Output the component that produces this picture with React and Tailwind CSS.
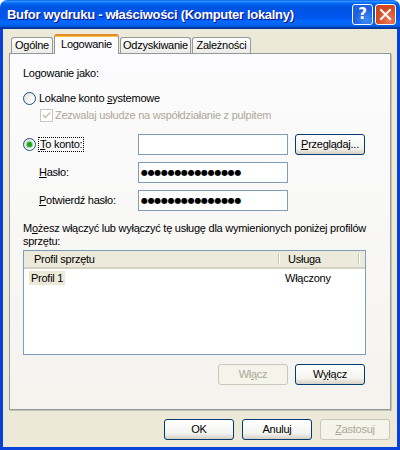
import React from "react";

function Radio({ checked }) {
  return (
    <span className="w-[13px] h-[13px] shrink-0 rounded-full border border-[#1c5180] bg-[linear-gradient(135deg,#dcdbd5,#ffffff_70%)] flex items-center justify-center">
      {checked && <span className="w-[5px] h-[5px] rounded-full bg-[#21a121] shadow-[0_0_1px_1px_#7fd87f]" />}
    </span>
  );
}

function DisabledCheck() {
  return (
    <span className="w-[13px] h-[13px] shrink-0 border border-[#cac8bb] bg-white flex items-center justify-center">
      <svg width="9" height="9" viewBox="0 0 9 9">
        <path d="M1 4 L3.5 6.5 L8 1.5" fill="none" stroke="#cac8bb" strokeWidth="1.8" />
      </svg>
    </span>
  );
}

function XpButton({ children, disabled }) {
  return (
    <div
      className={`h-[21px] w-[70px] rounded-[3px] border flex items-center justify-center ${
        disabled
          ? "border-[#c9c7ba] bg-[#f5f4ea] text-[#aca899]"
          : "border-[#003c74] bg-[linear-gradient(to_bottom,#ffffff,#f3f3ef_70%,#d6d0c5)] text-black"
      }`}
    >
      {children}
    </div>
  );
}

function Input({ password }) {
  return (
    <div className="h-[21px] w-[150px] border border-[#7f9db9] bg-white flex items-center pl-[2px]">
      {password && (
        <span className="font-['DejaVu_Sans',sans-serif] text-[8px] leading-none tracking-[-0.3px]">
          {"●".repeat(15)}
        </span>
      )}
    </div>
  );
}

function Tab({ label, active, w }) {
  if (active) {
    return (
      <div
        className={`${w} h-[20px] -mb-px relative z-10 rounded-t-[3px] border-x border-t-2 border-x-[#919b9c] border-t-[#e68b2c] shadow-[inset_0_1px_0_#ffc73c] bg-[#fcfcfe] flex items-center justify-center pb-[2px]`}
      >
        {label}
      </div>
    );
  }
  return (
    <div
      className={`${w} h-[16px] rounded-t-[3px] border-x border-t border-[#919b9c] bg-[linear-gradient(to_bottom,#ffffff,#ecebe6)] flex items-center justify-center`}
    >
      {label}
    </div>
  );
}

export default function App() {
  return (
    <div className="w-[400px] h-[450px] flex flex-col text-[11px] leading-[13px] tracking-[-0.25px] text-black font-['Liberation_Sans',Arial,sans-serif]">
      {/* title bar */}
      <div className="h-[29px] shrink-0 rounded-t-[7px] flex items-center pl-[7px] pr-[4px] bg-[linear-gradient(to_bottom,#0058ee_0%,#3593ff_4%,#288eff_6%,#127dff_8%,#036ffc_10%,#0262ee_14%,#0057e5_20%,#0054e3_24%,#0055eb_56%,#005bf5_66%,#026afe_76%,#0062ef_86%,#0052d6_92%,#0040ab_94%,#003092_100%)]">
        <div className="flex-1 text-white font-bold text-[13px] tracking-[-0.3px] [text-shadow:1px_1px_#0f1089] whitespace-nowrap">
          Bufor wydruku - właściwości (Komputer lokalny)
        </div>
        <div className="flex gap-[2px]">
          <div className="w-[21px] h-[21px] rounded-[3px] border border-white bg-[radial-gradient(circle_at_70%_80%,#3c8cf8,#1e5ede_60%,#2663e0)] flex items-center justify-center text-white font-bold text-[15px] font-['DejaVu_Sans',sans-serif]">
            ?
          </div>
          <div className="w-[21px] h-[21px] rounded-[3px] border border-white bg-[radial-gradient(circle_at_70%_80%,#e97a59,#d6491f_60%,#cc4520)] flex items-center justify-center">
            <svg width="13" height="13" viewBox="0 0 13 13">
              <path d="M2 2 L11 11 M11 2 L2 11" stroke="#ffffff" strokeWidth="2" strokeLinecap="square" />
            </svg>
          </div>
        </div>
      </div>

      {/* body */}
      <div className="flex-1 bg-[#ece9d8] border-x-[3px] border-b-[3px] border-[#0842d8] flex flex-col pl-[6px]">
        <div className="w-[383px] flex flex-col">
          {/* tabs */}
          <div className="h-[24px] flex items-end pl-[2px] gap-[1px]">
            <Tab label="Ogólne" w="w-[42px]" />
            <Tab label="Logowanie" w="w-[65px]" active />
            <Tab label="Odzyskiwanie" w="w-[71px]" />
            <Tab label="Zależności" w="w-[59px]" />
          </div>

          {/* panel */}
          <div className="h-[357px] w-[382px] border border-[#919b9c] shadow-[1px_1px_0_#c5c2b2] bg-[linear-gradient(to_bottom,#fcfcfe,#f4f3ee)] pl-[13px] flex flex-col">
            <div className="mt-[13px]">Logowanie jako:</div>

            <div className="mt-[12px] flex items-center gap-[3px]">
              <Radio />
              <span>
                Lokalne konto <span className="underline underline-offset-[1px]">s</span>ystemowe
              </span>
            </div>

            <div className="mt-[4px] ml-[17px] flex items-center gap-[2px] text-[#aca899]">
              <DisabledCheck />
              <span>Zezwalaj usłudze na współdziałanie z pulpitem</span>
            </div>

            <div className="mt-[12px] flex items-center">
              <div className="w-[115px] flex items-center gap-[2px]">
                <Radio checked />
                <span className="border border-dotted border-black px-[1px]">
                  <span className="underline underline-offset-[1px]">T</span>o konto:
                </span>
              </div>
              <Input />
              <div className="ml-[7px]">
                <XpButton>
                  <span>
                    <span className="underline underline-offset-[1px]">P</span>rzeglądaj...
                  </span>
                </XpButton>
              </div>
            </div>

            <div className="mt-[7px] flex items-center">
              <div className="w-[115px] pl-[16px]">
                <span className="underline underline-offset-[1px]">H</span>asło:
              </div>
              <Input password />
            </div>

            <div className="mt-[7px] flex items-center">
              <div className="w-[115px] pl-[16px]">
                <span className="underline underline-offset-[1px]">P</span>otwierdź hasło:
              </div>
              <Input password />
            </div>

            <div className="mt-[11px] whitespace-nowrap">
              M<span className="underline underline-offset-[1px]">o</span>żesz włączyć lub wyłączyć tę usługę dla wymienionych poniżej profilów
              <br />
              sprzętu:
            </div>

            {/* list view */}
            <div className="mt-[2px] w-[343px] h-[105px] border border-[#7f9db9] bg-white flex flex-col">
              <div className="h-[18px] flex bg-[#ebeadb] border-b-[2px] border-[#d6d2c2]">
                <div className="w-[254px] pl-[10px] flex items-center">Profil sprzętu</div>
                <div className="w-[2px] my-[3px] border-l border-[#c7c5b2] border-r border-r-white" />
                <div className="w-[78px] pl-[8px] flex items-center">Usługa</div>
                <div className="w-[2px] my-[3px] border-l border-[#c7c5b2] border-r border-r-white" />
              </div>
              <div className="mt-[2px] h-[14px] flex items-center">
                <div className="w-[256px] pl-[5px]">
                  <span className="bg-[#ece9d8] px-[2px] py-[1px]">Profil 1</span>
                </div>
                <div className="pl-[5px]">Włączony</div>
              </div>
            </div>

            <div className="mt-[9px] w-[343px] flex justify-end gap-[7px] pr-[1px]">
              <XpButton disabled>
                <span>
                  Wł<span className="underline underline-offset-[1px]">ą</span>cz
                </span>
              </XpButton>
              <XpButton>
                <span>
                  W<span className="underline underline-offset-[1px]">y</span>łącz
                </span>
              </XpButton>
            </div>
          </div>

          {/* dialog buttons */}
          <div className="mt-[9px] flex justify-end gap-[8px] pr-[2px]">
            <XpButton>OK</XpButton>
            <XpButton>Anuluj</XpButton>
            <XpButton disabled>
              <span>
                <span className="underline underline-offset-[1px]">Z</span>astosuj
              </span>
            </XpButton>
          </div>
        </div>
      </div>
    </div>
  );
}
